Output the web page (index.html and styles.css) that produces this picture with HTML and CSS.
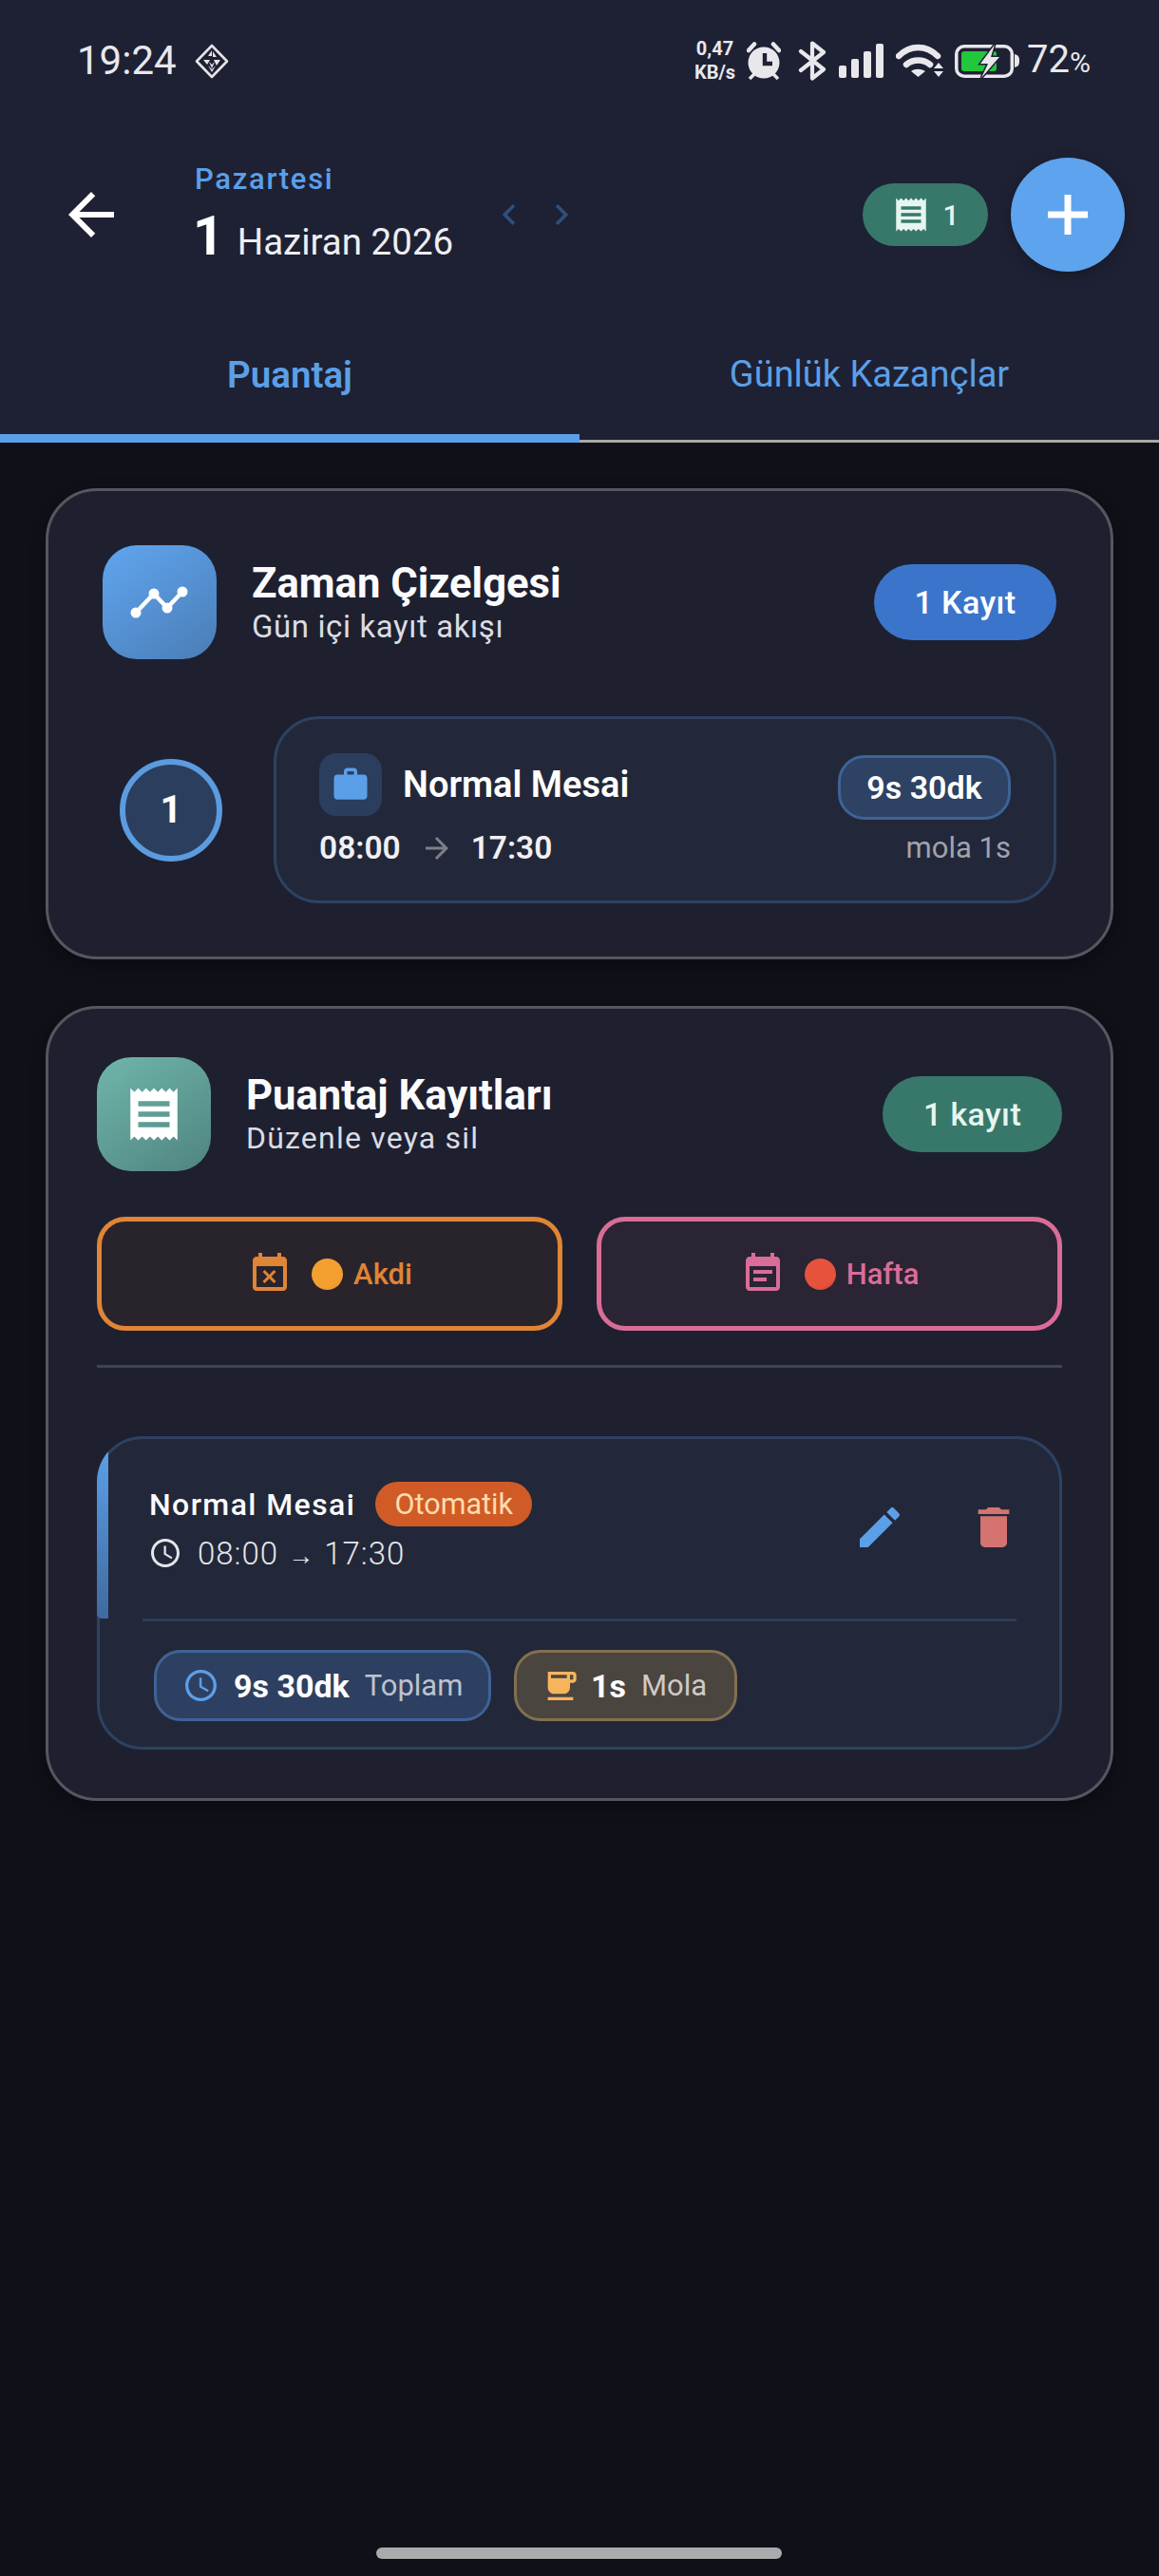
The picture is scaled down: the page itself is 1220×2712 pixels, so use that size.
FILE: index.html
```html
<!DOCTYPE html>
<html lang="tr">
<head>
<meta charset="utf-8">
<title>Puantaj</title>
<link rel="stylesheet" href="styles.css">
</head>
<body>
<header class="header">
  <div class="status">
    <span class="clock-text">19:24</span>
    <svg class="st-diamond" viewBox="0 0 36 37" width="36" height="37">
      <polygon points="18,2 34,18.5 18,35 2,18.5" fill="none" stroke="#e4e4e8" stroke-width="2.6" stroke-linejoin="round"/>
      <g fill="#e4e4e8"><polygon points="18,7 14,13 18,13"/><polygon points="19,8 23,14 19,14"/><polygon points="9,17 16,17 13,22"/><polygon points="20,17 27,17 23,23"/><polygon points="15,19 18,26 21,19 18,22"/><polygon points="14,23 18,30 22,23 18,27"/></g>
    </svg>
    <div class="st-right">
      <div class="speed"><span>0,47</span><span>KB/s</span></div>
      <svg class="st-alarm" viewBox="0 0 36 40" width="36" height="40">
        <circle cx="18" cy="22" r="16.5" fill="#e8e8ec"/>
        <path d="M2 9 8 2.5M34 9 28 2.5" stroke="#e8e8ec" stroke-width="4.5" stroke-linecap="round"/>
        <path d="M8 34 3 39M28 34l5 5" stroke="#e8e8ec" stroke-width="3.5"/>
        <path d="M19 12v11h8" fill="none" stroke="#1e2133" stroke-width="4.4"/>
      </svg>
      <svg class="st-bt" viewBox="0 0 30 42" width="30" height="42">
        <path d="M3 11 27 30 15 39.500V2.500L27 12 3 31" fill="none" stroke="#e8e8ec" stroke-width="4.2" stroke-linejoin="round" stroke-linecap="round"/>
      </svg>
      <svg class="st-signal" viewBox="0 0 47 36" width="47" height="36" fill="#e8e8ec">
        <rect x="0" y="23" width="8" height="13" rx="2"/><rect x="13" y="16" width="8" height="20" rx="2"/><rect x="26" y="8" width="8" height="28" rx="2"/><rect x="39" y="0" width="8" height="36" rx="2"/>
      </svg>
      <svg class="st-wifi" viewBox="0 0 50 36" width="50" height="36">
        <path d="M3 13C15 1 32 1 44 13" fill="none" stroke="#e8e8ec" stroke-width="6.500" stroke-linecap="round"/>
        <path d="M11 22c7-6 18-6 25 0" fill="none" stroke="#e8e8ec" stroke-width="6.500" stroke-linecap="round"/>
        <path d="M16 29c4-3 10-3 15 0l-7.500 6z" fill="#e8e8ec"/>
        <path d="M45 20l5 6H40zM40 29h10l-5 6z" fill="#e8e8ec"/>
      </svg>
      <svg class="st-batt" viewBox="0 0 68 35" width="68" height="35">
        <rect x="1.800" y="1.800" width="58.500" height="31.400" rx="8" fill="none" stroke="#e8e8ec" stroke-width="3.500"/>
        <path d="M63 10c4 1 5 3 5 7s-1 6-5 7z" fill="#e8e8ec"/>
        <rect x="7" y="7" width="37" height="21" rx="3" fill="#22c83c"/>
        <path d="M42 0 27 20h8l-7 15 19-22h-9z" fill="#e8e8ec" stroke="#1e2133" stroke-width="3" paint-order="stroke"/>
      </svg>
      <span class="batt-text">72<small>%</small></span>
    </div>
  </div>
  <div class="toolbar">
    <svg class="back" viewBox="0 0 24 24" width="72" height="72" fill="#fff"><path d="M20 11H7.830l5.590-5.590L12 4l-8 8 8 8 1.410-1.410L7.830 13H20v-2z"/></svg>
    <div class="date">
      <span class="weekday">Pazartesi</span>
      <span class="day-line"><b class="day">1</b><span class="month">Haziran 2026</span></span>
    </div>
    <div class="chevrons">
      <svg viewBox="0 0 24 24" width="44" height="44" fill="#2f4f7c"><path d="M15.410 7.410 14 6l-6 6 6 6 1.410-1.410L10.830 12z"/></svg>
      <svg viewBox="0 0 24 24" width="44" height="44" fill="#2f4f7c"><path d="M10 6 8.590 7.410 13.170 12l-4.580 4.590L10 18l6-6z"/></svg>
    </div>
    <div class="count-chip">
      <svg viewBox="0 0 24 24" width="42" height="42" fill="#e6f5f0"><path d="M18 17H6v-2h12v2zm0-4H6v-2h12v2zm0-4H6V7h12v2zM3 22l1.500-1.500L6 22l1.500-1.500L9 22l1.500-1.500L12 22l1.500-1.500L15 22l1.500-1.500L18 22l1.500-1.500L21 22V2l-1.500 1.500L18 2l-1.500 1.500L15 2l-1.500 1.500L12 2l-1.500 1.500L9 2 7.500 3.500 6 2 4.500 3.500 3 2v20z"/></svg>
      <span>1</span>
    </div>
    <div class="fab">
      <svg viewBox="0 0 42 42" width="42" height="42" fill="#fff"><path d="M17.500 0h7v17.500H42v7H24.500V42h-7V24.500H0v-7h17.500z"/></svg>
    </div>
  </div>
  <nav class="tabs">
    <div class="tab tab-active">Puantaj</div>
    <div class="tab">Günlük Kazançlar</div>
  </nav>
</header>

<main class="main">
  <section class="card card-timeline">
    <div class="card-head">
      <div class="head-icon head-icon-blue">
        <svg viewBox="0 0 62 36" width="62" height="36"><path d="M6 29 25 9l14 15L55 7" fill="none" stroke="#fff" stroke-width="4.500" stroke-linejoin="round"/><g fill="#fff"><circle cx="6" cy="29" r="5.500"/><circle cx="25" cy="9" r="5.500"/><circle cx="39" cy="24" r="5.500"/><circle cx="55" cy="7" r="5.500"/></g></svg>
      </div>
      <div class="head-text">
        <h2 class="head-title">Zaman Çizelgesi</h2>
        <p class="head-sub">Gün içi kayıt akışı</p>
      </div>
      <span class="head-badge badge-blue">1 Kayıt</span>
    </div>
    <div class="timeline-row">
      <div class="step">1</div>
      <div class="tl-item">
        <div class="tl-top">
          <div class="tl-icon">
            <svg viewBox="0 0 24 24" width="42" height="42" fill="#5b9fe8"><path d="M20 6h-4V4c0-1.110-.89-2-2-2h-4c-1.110 0-2 .89-2 2v2H4c-1.110 0-1.990.89-1.990 2L2 19c0 1.110.89 2 2 2h16c1.110 0 2-.89 2-2V8c0-1.110-.89-2-2-2zm-6 0h-4V4h4v2z"/></svg>
          </div>
          <span class="tl-name">Normal Mesai</span>
          <span class="tl-pill">9s 30dk</span>
        </div>
        <div class="tl-bottom">
          <span class="tl-time">08:00</span>
          <svg class="tl-arrow" viewBox="0 0 24 24" width="36" height="36" fill="#7d7f88"><path d="m12 4-1.410 1.410L16.170 11H4v2h12.170l-5.580 5.590L12 20l8-8z"/></svg>
          <span class="tl-time">17:30</span>
          <span class="tl-break">mola 1s</span>
        </div>
      </div>
    </div>
  </section>

  <section class="card card-records">
    <div class="card-head">
      <div class="head-icon head-icon-teal">
        <svg viewBox="0 0 24 24" width="66" height="66" fill="#fff"><path d="M18 17H6v-2h12v2zm0-4H6v-2h12v2zm0-4H6V7h12v2zM3 22l1.500-1.500L6 22l1.500-1.500L9 22l1.500-1.500L12 22l1.500-1.500L15 22l1.500-1.500L18 22l1.500-1.500L21 22V2l-1.500 1.500L18 2l-1.500 1.500L15 2l-1.500 1.500L12 2l-1.500 1.500L9 2 7.500 3.500 6 2 4.500 3.500 3 2v20z"/></svg>
      </div>
      <div class="head-text">
        <h2 class="head-title">Puantaj Kayıtları</h2>
        <p class="head-sub head-sub-wide">Düzenle veya sil</p>
      </div>
      <span class="head-badge badge-teal">1 kayıt</span>
    </div>
    <div class="filters">
      <div class="filter filter-orange">
        <svg viewBox="0 0 24 24" width="48" height="48" fill="#e08535"><path d="m9.310 17 2.440-2.440L14.190 17l1.060-1.060-2.440-2.440 2.440-2.440L14.190 10l-2.440 2.440L9.310 10l-1.060 1.060 2.440 2.440-2.440 2.440L9.310 17zM19 3h-1V1h-2v2H8V1H6v2H5c-1.110 0-1.990.9-1.990 2L3 19c0 1.100.89 2 2 2h14c1.100 0 2-.9 2-2V5c0-1.100-.9-2-2-2zm0 16H5V8h14v11z"/></svg>
        <span class="dot dot-orange"></span>
        <span>Akdi</span>
      </div>
      <div class="filter filter-pink">
        <svg viewBox="0 0 24 24" width="48" height="48" fill="#d96d97"><path d="M17 10H7v2h10v-2zm2-7h-1V1h-2v2H8V1H6v2H5c-1.110 0-1.990.9-1.990 2L3 19c0 1.100.89 2 2 2h14c1.100 0 2-.9 2-2V5c0-1.100-.9-2-2-2zm0 16H5V8h14v11zm-5-5H7v2h7v-2z"/></svg>
        <span class="dot dot-red"></span>
        <span>Hafta</span>
      </div>
    </div>
    <div class="rule"></div>
    <article class="entry">
      <div class="entry-bar-clip"><div class="entry-bar"></div></div>
      <div class="entry-top">
        <div class="entry-info">
          <div class="entry-title-row">
            <span class="entry-title">Normal Mesai</span>
            <span class="entry-tag">Otomatik</span>
          </div>
          <div class="entry-time-row">
            <svg viewBox="2 2 20 20" width="30" height="30" fill="#e5e6ea"><path d="M11.990 2C6.470 2 2 6.480 2 12s4.470 10 9.990 10C17.520 22 22 17.520 22 12S17.520 2 11.990 2zM12 20c-4.420 0-8-3.580-8-8s3.580-8 8-8 8 3.580 8 8-3.580 8-8 8zm.5-13H11v6l5.250 3.150.75-1.230-4.500-2.670z"/></svg>
            <span>08:00 <small class="mini-arrow">→</small> 17:30</span>
          </div>
        </div>
        <div class="entry-actions">
          <svg viewBox="0 0 24 24" width="56" height="56" fill="#5b9fe8"><path d="M3 17.250V21h3.750L17.810 9.940l-3.750-3.750L3 17.250zM20.710 7.040a1 1 0 0 0 0-1.410l-2.340-2.340a1 1 0 0 0-1.410 0l-1.830 1.830 3.750 3.750 1.830-1.830z"/></svg>
          <svg viewBox="0 0 24 24" width="56" height="56" fill="#d4736f"><path d="M6 19c0 1.100.9 2 2 2h8c1.100 0 2-.9 2-2V7H6v12zM19 4h-3.500l-1-1h-5l-1 1H5v2h14V4z"/></svg>
        </div>
      </div>
      <div class="entry-rule"></div>
      <div class="entry-chips">
        <div class="chip chip-blue">
          <svg viewBox="2 2 20 20" width="33" height="33" fill="#5b9fe8"><path d="M11.990 2C6.470 2 2 6.480 2 12s4.470 10 9.990 10C17.520 22 22 17.520 22 12S17.520 2 11.990 2zM12 20c-4.420 0-8-3.580-8-8s3.580-8 8-8 8 3.580 8 8-3.580 8-8 8zm.5-13H11v6l5.250 3.150.75-1.230-4.500-2.670z"/></svg>
          <b class="chip-value">9s 30dk</b>
          <span class="chip-label chip-label-blue">Toplam</span>
        </div>
        <div class="chip chip-amber">
          <svg viewBox="0 0 24 24" width="40" height="40" fill="#f7b55b"><path fill-rule="evenodd" d="M20 3H4v10c0 2.210 1.790 4 4 4h6c2.210 0 4-1.790 4-4v-3h2c1.110 0 2-.9 2-2V5c0-1.110-.89-2-2-2zm0 5h-2V5h2v3zM4 19h16v2H4zM6 5h10v2H6z"/></svg>
          <b class="chip-value chip-value-tight">1s</b>
          <span class="chip-label chip-label-amber">Mola</span>
        </div>
      </div>
    </article>
  </section>
</main>
<div class="home-bar"></div>
</body>
</html>
```

FILE: styles.css
```css
* { box-sizing: border-box; }
html, body { margin: 0; padding: 0; }
body {
  width: 1220px;
  height: 2712px;
  overflow: hidden;
  position: relative;
  background: #0f1018;
  font-family: Roboto, "Noto Sans", sans-serif;
  color: #fff;
  display: flex;
  flex-direction: column;
}
svg { display: block; flex: none; }

/* header */
.header { background: #1e2133; height: 466px; flex: none; }
.status {
  height: 128px;
  padding: 0 72px 0 81px;
  display: flex;
  align-items: center;
  color: #e8e8ec;
}
.clock-text { font-size: 42px; line-height: 50px; }
.st-diamond { margin-left: 19px; }
.st-right { margin-left: auto; display: flex; align-items: center; }
.speed {
  display: flex;
  flex-direction: column;
  align-items: center;
  font-size: 20px;
  font-weight: 700;
  line-height: 25px;
  width: 41px;
}
.st-alarm { margin-left: 13px; }
.st-bt { margin-left: 18px; }
.st-signal { margin-left: 13px; }
.st-wifi { margin-left: 13px; }
.st-batt { margin-left: 12px; }
.batt-text { margin-left: 8px; font-size: 40px; line-height: 46px; }
.batt-text small { font-size: 30px; }

.toolbar {
  height: 196px;
  padding: 0 36px 0 60px;
  display: flex;
  align-items: center;
}
.date { margin-left: 73px; padding-top: 6px; display: flex; flex-direction: column; width: 270px; }
.weekday {
  font-size: 31px;
  line-height: 35px;
  font-weight: 500;
  letter-spacing: 1.7px;
  color: #5b9fe8;
}
.day-line { margin-top: 9px; line-height: 67px; display: flex; align-items: baseline; white-space: nowrap; }
.day { font-size: 57px; font-weight: 700; margin-left: -2px; }
.month { font-size: 38.500px; margin-left: 14px; color: #eeeef2; }
.chevrons { margin-left: 39px; display: flex; gap: 11px; }
.count-chip {
  margin-left: auto;
  width: 132px;
  height: 66px;
  border-radius: 33px;
  background: #37786a;
  display: flex;
  align-items: center;
  justify-content: center;
  gap: 12px;
  color: #e6f5f0;
  font-size: 30px;
  font-weight: 500;
}
.fab {
  margin-left: 24px;
  width: 120px;
  height: 120px;
  border-radius: 50%;
  background: #5ea3ee;
  display: flex;
  align-items: center;
  justify-content: center;
  box-shadow: 0 4px 14px rgba(0, 0, 0, .25);
}
.tabs { display: flex; height: 142px; }
.tab {
  flex: 1;
  text-align: center;
  padding-top: 49px;
  font-size: 38px;
  line-height: 43px;
  color: #5b9fe8;
  border-bottom: 3px solid #a8a8a8;
}
.tab-active { font-size: 38.500px; font-weight: 600; border-bottom: 9px solid #5b9fe8; }

/* cards */
.main { padding: 48px 48px 0; display: flex; flex-direction: column; gap: 49px; }
.card {
  background: #1e2030;
  border: 3px solid #55575f;
  border-radius: 54px;
  box-shadow: 0 6px 18px rgba(0, 0, 0, .25);
}
.card-timeline { padding: 57px 57px 56px; }
.card-records { padding: 51px; }
.card-head { display: flex; align-items: center; }
.head-icon {
  width: 120px;
  height: 120px;
  border-radius: 36px;
  display: flex;
  align-items: center;
  justify-content: center;
  flex: none;
}
.head-icon-blue { background: linear-gradient(145deg, #60a5f0, #4a7db5); }
.head-icon-teal { background: linear-gradient(145deg, #70b6aa, #4f8480); }
.head-text { margin-left: 37px; }
.head-title { margin: 0; font-size: 43.600px; line-height: 50px; font-weight: 700; color: #fbfbfd; }
.head-sub { margin: 1px 0 0; font-size: 33px; line-height: 37px; color: #dcdce2; letter-spacing: .6px; }
.head-sub-wide { font-size: 32px; letter-spacing: 1.2px; }
.head-badge {
  margin-left: auto;
  height: 80px;
  border-radius: 40px;
  display: flex;
  align-items: center;
  font-size: 34px;
  font-weight: 500;
  letter-spacing: .4px;
}
.badge-blue { width: 192px; justify-content: center; background: #3b74cb; }
.badge-teal { width: 189px; justify-content: center; background: #37786a; color: #e6f5f0; }

/* timeline */
.timeline-row { margin-top: 60px; padding-left: 18px; display: flex; align-items: center; gap: 54px; }
.step {
  width: 108px;
  height: 108px;
  flex: none;
  border-radius: 50%;
  border: 6px solid #5b9bdf;
  background: #2b3e5e;
  display: flex;
  align-items: center;
  justify-content: center;
  font-size: 40px;
  font-weight: 700;
}
.tl-item {
  flex: 1;
  height: 197px;
  padding: 36px 45px;
  background: #222839;
  border: 3px solid #2d4262;
  border-radius: 48px;
}
.tl-top { display: flex; align-items: flex-start; height: 70px; }
.tl-icon {
  width: 66px;
  height: 66px;
  border-radius: 18px;
  background: #2b3e5e;
  display: flex;
  align-items: center;
  justify-content: center;
}
.tl-name { margin-left: 22px; font-size: 38px; line-height: 66px; font-weight: 600; }
.tl-pill {
  margin: 2px 0 0 auto;
  width: 182px;
  height: 68px;
  border: 3px solid #3e6396;
  border-radius: 28px;
  background: #2e4263;
  display: flex;
  align-items: center;
  justify-content: center;
  font-size: 34px;
  font-weight: 600;
}
.tl-bottom { margin-top: 11px; display: flex; align-items: center; height: 38px; }
.tl-time { font-size: 33.500px; line-height: 38px; font-weight: 600; color: #f0f0f4; }
.tl-arrow { margin: 0 18px 0 20px; }
.tl-break { margin-left: auto; font-size: 31px; line-height: 38px; color: #a1a3ad; }

/* filters */
.filters { margin-top: 48px; display: grid; grid-template-columns: 1fr 1fr; gap: 36px; }
.filter {
  height: 120px;
  border-radius: 30px;
  display: flex;
  align-items: center;
  justify-content: center;
  font-size: 31px;
  font-weight: 500;
}
.filter-orange { border: 5px solid #e08535; background: #29242c; color: #e08535; }
.filter-pink { border: 5px solid #d96d97; background: #2a2434; color: #d96d97; }
.dot { width: 33px; height: 33px; border-radius: 50%; margin: 0 11px 0 20px; }
.dot-orange { background: radial-gradient(circle at 40% 30%, #f4a030 65%, #d98a20); }
.dot-red { background: radial-gradient(circle at 40% 30%, #e5533d 65%, #b93c2a); }
.rule { margin-top: 36px; height: 3px; background: #404355; }

/* entry */
.entry {
  position: relative;
  margin-top: 72px;
  height: 330px;
  background: #222839;
  border: 3px solid #2d4262;
  border-radius: 48px;
}
.entry-bar-clip {
  position: absolute;
  inset: -3px;
  border-radius: 48px;
  overflow: hidden;
  pointer-events: none;
}
.entry-bar {
  width: 12px;
  height: 192px;
  background: linear-gradient(180deg, #5ea3ee, #3f6a9f);
  border-bottom-left-radius: 5px;
}
.entry-top { display: flex; height: 189px; padding: 45px 41px 0 52px; }
.entry-title-row { display: flex; align-items: center; height: 47px; }
.entry-title { font-size: 32px; font-weight: 500; letter-spacing: 1.4px; color: #fbfbfd; }
.entry-tag {
  margin-left: 21px;
  width: 165px;
  height: 47px;
  border-radius: 24px;
  background: #d05b27;
  color: #ffdcae;
  display: flex;
  align-items: center;
  justify-content: center;
  font-size: 30.500px;
}
.entry-time-row {
  margin-top: 9px;
  display: flex;
  align-items: center;
  gap: 19px;
  padding-left: 2px;
  height: 38px;
  font-size: 33px;
  font-weight: 300;
  color: #e5e6ea;
  letter-spacing: 1px;
}
.mini-arrow { font-size: 27px; font-family: "Liberation Sans", sans-serif; font-weight: 400; margin: 0 1px; }
.entry-actions { margin: 20px 0 0 auto; display: flex; gap: 64px; }
.entry-rule { margin: 0 45px; height: 3px; background: #2d3d59; }
.entry-chips { padding: 30px 0 0 57px; display: flex; gap: 24px; }
.chip {
  height: 75px;
  border-radius: 28px;
  display: flex;
  align-items: center;
  font-size: 34px;
}
.chip-blue { width: 355px; padding-left: 30px; background: #2e4061; border: 3px solid #3e6396; }
.chip-amber { width: 235px; padding-left: 26px; background: #4b4540; border: 3px solid #83704f; }
.chip-value { margin-left: 18px; font-weight: 700; }
.chip-value-tight { margin-left: 12px; }
.chip-label { margin-left: 16px; font-size: 31px; }
.chip-label-blue { color: #bcc3d0; }
.chip-label-amber { color: #cfcac5; }

.home-bar {
  position: absolute;
  left: 396px;
  top: 2682px;
  width: 427px;
  height: 12px;
  border-radius: 6px;
  background: #a9abac;
}
```
